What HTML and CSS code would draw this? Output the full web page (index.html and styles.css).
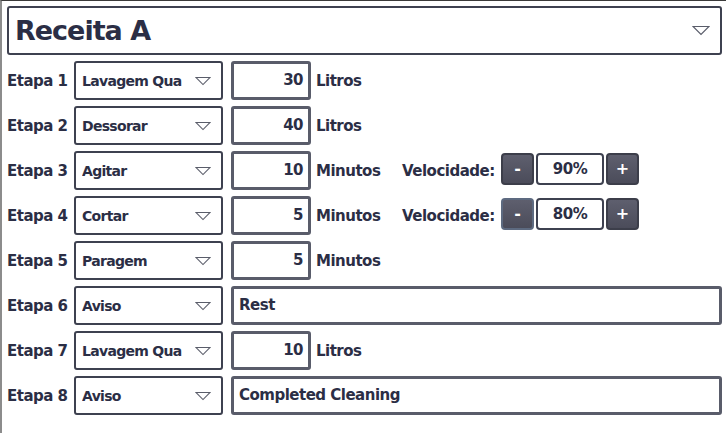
FILE: index.html
```html
<!DOCTYPE html>
<html lang="pt">
<head>
  <meta charset="UTF-8">
  <title>Receita A</title>
  <link rel="stylesheet" href="styles.css">
</head>
<body>
  <main class="recipe">

    <!-- recipe picker -->
    <div class="recipe-select">
      <span class="recipe-name">Receita A</span>
      <svg class="arrow big" viewBox="0 0 18 10"><path d="M1 1 L17 1 L9 9 Z"/></svg>
    </div>

    <!-- steps -->
    <div class="step">
      <span class="step-label">Etapa 1</span>
      <div class="combo"><span class="combo-text">Lavagem Qua</span><svg class="arrow" viewBox="0 0 18 10"><path d="M1 1 L17 1 L9 9 Z"/></svg></div>
      <div class="num">30</div>
      <span class="unit">Litros</span>
    </div>

    <div class="step">
      <span class="step-label">Etapa 2</span>
      <div class="combo"><span class="combo-text">Dessorar</span><svg class="arrow" viewBox="0 0 18 10"><path d="M1 1 L17 1 L9 9 Z"/></svg></div>
      <div class="num">40</div>
      <span class="unit">Litros</span>
    </div>

    <div class="step">
      <span class="step-label">Etapa 3</span>
      <div class="combo"><span class="combo-text">Agitar</span><svg class="arrow" viewBox="0 0 18 10"><path d="M1 1 L17 1 L9 9 Z"/></svg></div>
      <div class="num">10</div>
      <span class="unit">Minutos</span>
      <span class="speed-label">Velocidade:</span>
      <button class="step-btn">-</button>
      <div class="speed-value">90%</div>
      <button class="step-btn">+</button>
    </div>

    <div class="step">
      <span class="step-label">Etapa 4</span>
      <div class="combo"><span class="combo-text">Cortar</span><svg class="arrow" viewBox="0 0 18 10"><path d="M1 1 L17 1 L9 9 Z"/></svg></div>
      <div class="num">5</div>
      <span class="unit">Minutos</span>
      <span class="speed-label">Velocidade:</span>
      <button class="step-btn focus">-</button>
      <div class="speed-value">80%</div>
      <button class="step-btn">+</button>
    </div>

    <div class="step">
      <span class="step-label">Etapa 5</span>
      <div class="combo"><span class="combo-text">Paragem</span><svg class="arrow" viewBox="0 0 18 10"><path d="M1 1 L17 1 L9 9 Z"/></svg></div>
      <div class="num">5</div>
      <span class="unit">Minutos</span>
    </div>

    <div class="step">
      <span class="step-label">Etapa 6</span>
      <div class="combo"><span class="combo-text">Aviso</span><svg class="arrow" viewBox="0 0 18 10"><path d="M1 1 L17 1 L9 9 Z"/></svg></div>
      <div class="text-field">Rest</div>
    </div>

    <div class="step">
      <span class="step-label">Etapa 7</span>
      <div class="combo"><span class="combo-text">Lavagem Qua</span><svg class="arrow" viewBox="0 0 18 10"><path d="M1 1 L17 1 L9 9 Z"/></svg></div>
      <div class="num">10</div>
      <span class="unit">Litros</span>
    </div>

    <div class="step">
      <span class="step-label">Etapa 8</span>
      <div class="combo"><span class="combo-text">Aviso</span><svg class="arrow" viewBox="0 0 18 10"><path d="M1 1 L17 1 L9 9 Z"/></svg></div>
      <div class="text-field">Completed Cleaning</div>
    </div>

  </main>
</body>
</html>
```

FILE: styles.css
```css
/* Basic reset */
html, body {
    margin: 0;
    padding: 0;
    height: 100%;
    background: #fff;
}

body {
    box-sizing: border-box;
    border-top: 1px solid #3a3a3a;
    border-left: 2px solid #8c8c8c;
    font-family: "DejaVu Sans", Verdana, sans-serif;
    font-weight: bold;
    color: #2b2e45;
}

.recipe {
    padding: 5px 4px 0 5px;
}

/* Recipe picker on top */
.recipe-select {
    height: 49px;
    box-sizing: border-box;
    border: 2px solid #3e4150;
    border-radius: 3px;
    display: flex;
    align-items: center;
    justify-content: space-between;
    padding: 0 10px 0 6px;
    margin-bottom: 6px;
}

.recipe-name {
    font-size: 27px;
    letter-spacing: -1px;
}

/* Dropdown arrow */
.arrow {
    width: 16px;
    height: 10px;
    flex-shrink: 0;
    margin-left: auto;
}

.arrow path {
    fill: none;
    stroke: #5a5d6a;
    stroke-width: 1.2;
}

.arrow.big {
    width: 18px;
    height: 11px;
}

/* Step rows */
.step {
    display: flex;
    align-items: center;
    height: 39px;
    margin-bottom: 6px;
    font-size: 15px;
    letter-spacing: -0.5px;
}

.step-label {
    width: 67px;
    flex-shrink: 0;
}

.combo {
    width: 149px;
    height: 39px;
    box-sizing: border-box;
    border: 2px solid #3e4150;
    border-radius: 3px;
    display: flex;
    align-items: center;
    padding: 0 10px 0 6px;
    flex-shrink: 0;
}

.combo-text {
    width: 101px;
    font-size: 14px;
    letter-spacing: -0.7px;
    white-space: nowrap;
    overflow: hidden;
}

.num {
    width: 80px;
    height: 39px;
    box-sizing: border-box;
    margin-left: 8px;
    border: 3px solid #595c6a;
    border-radius: 3px;
    text-align: right;
    line-height: 33px;
    padding-right: 5px;
}

.unit {
    width: 86px;
    margin-left: 5px;
}

.text-field {
    flex: 1;
    height: 39px;
    box-sizing: border-box;
    margin-left: 8px;
    border: 3px solid #595c6a;
    border-radius: 3px;
    line-height: 33px;
    padding-left: 5px;
}

/* Speed stepper */
.speed-label {
    width: 99px;
}

.step-btn {
    width: 33px;
    height: 32px;
    margin-top: -4px;
    border: 2px solid #3c3e4a;
    border-radius: 4px;
    background: linear-gradient(#5e5f6e, #4b4c5a);
    color: #fff;
    font-family: "DejaVu Sans", Verdana, sans-serif;
    font-weight: bold;
    font-size: 16px;
    padding: 0;
}

.step-btn.focus {
    border-color: #5d6a80;
}

.speed-value {
    width: 68px;
    height: 32px;
    margin: -4px 2px 0;
    box-sizing: border-box;
    border: 2px solid #3e4150;
    border-radius: 4px;
    text-align: center;
    line-height: 28px;
}
```
